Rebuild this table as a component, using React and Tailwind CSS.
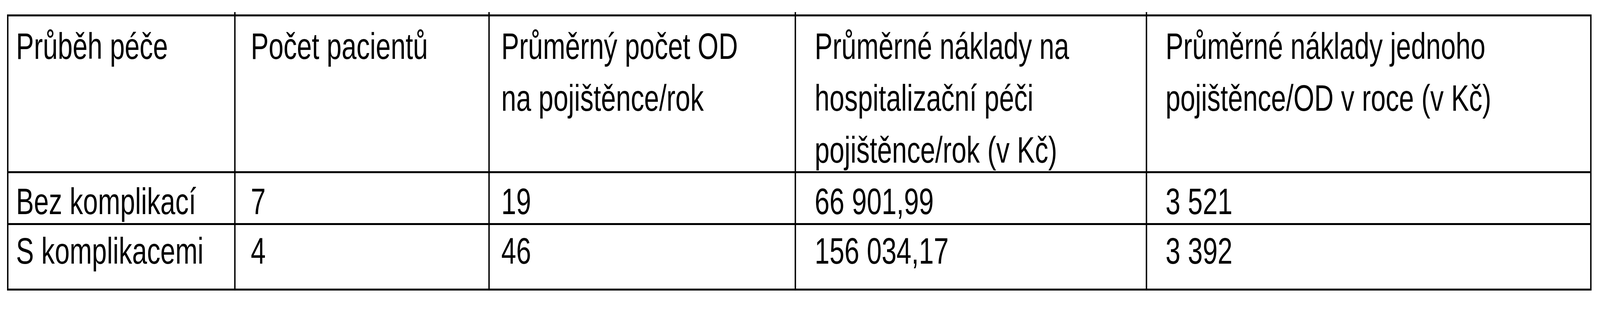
const header = [
  { pad: 'pl-[27px]', lines: ['Průběh péče'] },
  { pad: 'pl-[54px]', lines: ['Počet pacientů'] },
  { pad: 'pl-[41px]', lines: ['Průměrný počet OD', 'na pojištěnce/rok'] },
  { pad: 'pl-[66px]', lines: ['Průměrné náklady na', 'hospitalizační péči', 'pojištěnce/rok (v Kč)'] },
  { pad: 'pl-[65px]', lines: ['Průměrné náklady jednoho', 'pojištěnce/OD v roce (v Kč)'] },
]

const rows = [
  { top: 'pt-[6px]', cells: ['Bez komplikací', '7', '19', '66 901,99', '3 521'] },
  { top: 'pt-0', cells: ['S komplikacemi', '4', '46', '156 034,17', '3 392'] },
]

// the window comes out 4096 wide, so the 5678-wide sheet is squeezed sideways to fit
export default function App() {
  return (
    <div className="w-[4096px] h-[800px] overflow-hidden bg-white">
      <div className="w-[5678px] h-[800px] origin-top-left scale-x-[0.72138] pt-[31px] pl-[25px] text-black text-[95px] leading-[133px] font-['Liberation_Sans',Arial,sans-serif]">
        {/* column rules poke a little above the top border */}
        <div className="flex h-[6px]">
          <div className="w-[806px]" />
          <div className="w-[5px] bg-black" />
          <div className="w-[897px]" />
          <div className="w-[5px] bg-black" />
          <div className="w-[1082px]" />
          <div className="w-[5px] bg-black" />
          <div className="w-[1241px]" />
          <div className="w-[5px] bg-black" />
        </div>
        <div className="grid w-[5623px] grid-cols-[801px_897px_1082px_1241px_1572px] grid-rows-[397px_128px_163px] gap-[5px] p-[5px] bg-black">
          {header.map((h, i) => (
            <div key={i} className={`bg-white pt-[10px] whitespace-nowrap ${h.pad}`}>
              {h.lines.map((l, j) => (
                <div key={j}>{l}</div>
              ))}
            </div>
          ))}
          {rows.map((r, ri) =>
            r.cells.map((c, ci) => (
              <div key={`${ri}-${ci}`} className={`bg-white whitespace-nowrap ${r.top} ${header[ci].pad}`}>
                {c}
              </div>
            ))
          )}
        </div>
      </div>
    </div>
  )
}
